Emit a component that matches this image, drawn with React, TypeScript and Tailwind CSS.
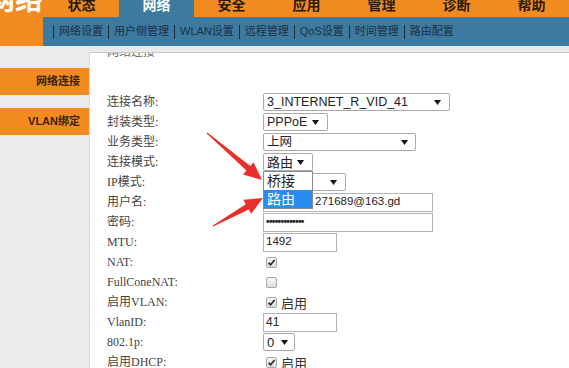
import React from "react";

const SANS = "font-[family-name:'Liberation_Sans','Noto_Sans_CJK_SC',sans-serif]";

function Tri() {
  return (
    <svg width="7" height="5" viewBox="0 0 7 5" className="shrink-0">
      <path d="M0 0 L7 0 L3.5 5 Z" fill="#111" />
    </svg>
  );
}

function Check({ on }: { on: boolean }) {
  return (
    <span className="ml-[3px] w-[11px] h-[11px] rounded-[2px] border border-[#a8a8a8] bg-gradient-to-b from-[#f6f6f6] to-[#dedede] flex items-center justify-center">
      {on && (
        <svg width="9" height="9" viewBox="0 0 9 9">
          <path d="M1.6 4.8 L3.6 6.8 L7.6 2" stroke="#2a2a2a" strokeWidth="1.7" fill="none" />
        </svg>
      )}
    </span>
  );
}

const labels = [
  "连接名称:",
  "封装类型:",
  "业务类型:",
  "连接模式:",
  "IP模式:",
  "用户名:",
  "密码:",
  "MTU:",
  "NAT:",
  "FullConeNAT:",
  "启用VLAN:",
  "VlanID:",
  "802.1p:",
  "启用DHCP:",
];

export default function App() {
  const selBase =
    "h-[18px] border border-[#a9a9a9] rounded-[2px] bg-white flex items-center justify-between pl-[3px] text-[12.5px] text-[#222] leading-none " +
    SANS;
  const inBase =
    "h-[19px] border border-[#b4b4b4] bg-white flex items-center pl-[2px] text-[11.5px] text-[#222] leading-none " +
    SANS;

  const controls: React.ReactNode[] = [
    <div className={selBase + " w-[187px] pr-[8px]"}>
      <span>3_INTERNET_R_VID_41</span>
      <Tri />
    </div>,
    <div className={selBase + " w-[65px] pr-[8px]"}>
      <span>PPPoE</span>
      <Tri />
    </div>,
    <div className={selBase + " w-[153px] pr-[7px]"}>
      <span>上网</span>
      <Tri />
    </div>,
    <div className="relative">
      <div className={selBase + " w-[50px] pr-[8px] border-[#7eaedc]"}>
        <span className="text-[13px]">路由</span>
        <Tri />
      </div>
      <div className={"absolute left-0 top-[18px] z-10 w-[50px] border border-[#8a8a8a] bg-white flex flex-col text-[14px] leading-none " + SANS}>
        <div className="h-[18px] flex items-center pl-[3px] text-[#222]">桥接</div>
        <div className="h-[18px] flex items-center pl-[3px] bg-[#2a8cf0] text-white">路由</div>
      </div>
    </div>,
    <div className={selBase + " w-[83px] pr-[8px] justify-end"}>
      <Tri />
    </div>,
    <div className={inBase + " w-[170px] pl-[51px]"}>271689@163.gd</div>,
    <div className={"h-[19px] w-[170px] border border-[#b4b4b4] bg-white flex items-center pl-[2px] text-[10px] font-bold tracking-[-0.6px] text-[#222] leading-none " + SANS}>
      •••••••••••••
    </div>,
    <div className={inBase + " w-[74px]"}>1492</div>,
    <Check on={true} />,
    <Check on={false} />,
    <div className="flex items-center">
      <Check on={true} />
      <span className={"ml-[4px] mt-[3px] text-[13px] text-[#333] " + SANS}>启用</span>
    </div>,
    <div className={inBase + " w-[74px] text-[12px]"}>41</div>,
    <div className={selBase + " w-[32px] pr-[6px]"}>
      <span className="text-[13px]">0</span>
      <Tri />
    </div>,
    <div className="flex items-center">
      <Check on={true} />
      <span className={"ml-[4px] mt-[3px] text-[13px] text-[#333] " + SANS}>启用</span>
    </div>,
  ];

  const tabs = ["状态", "网络", "安全", "应用", "管理", "诊断", "帮助"];
  const subs = ["网络设置", "用户侧管理", "WLAN设置", "远程管理", "QoS设置", "时间管理", "路由配置"];

  return (
    <div className="relative w-[569px] h-[368px] overflow-hidden bg-white">
      {/* header */}
      <div className="flex h-[46px]">
        <div className="w-[90px] bg-[#f18b1f] overflow-hidden">
          <div className={"-mt-[13px] -ml-[13px] text-[28px] leading-[28px] font-bold text-white whitespace-nowrap " + SANS}>
            网络
          </div>
        </div>
        <div className="flex-1 flex flex-col">
          <div className="h-[17px] bg-[#f18b1f] flex pl-[1px]">
            {tabs.map((t) => (
              <div
                key={t}
                className={
                  "w-[75px] shrink-0 flex justify-center text-[14px] leading-[13px] font-bold " +
                  SANS +
                  (t === "网络" ? " bg-[#3d7aa0] text-white" : " text-[#2a1a08]")
                }
              >
                <span className="-mt-[1px]">{t}</span>
              </div>
            ))}
          </div>
          <div className={"h-[29px] bg-[#3d7aa0] flex items-center pl-[10px] text-[11px] text-[#1b3044] " + SANS}>
            {subs.map((s) => (
              <React.Fragment key={s}>
                <span className="w-px h-[14px] bg-[#1b2d3e]" />
                <span className="px-[5px] leading-none">{s}</span>
              </React.Fragment>
            ))}
          </div>
        </div>
      </div>

      {/* body */}
      <div className="flex h-[322px]">
        <div className={"w-[89px] bg-[#ebebeb] flex flex-col pt-[22px] gap-[13px] text-[11px] font-bold text-[#3a2410] " + SANS}>
          <div className="h-[27px] bg-[#f18b1f] flex items-center justify-end pr-[9px]">网络连接</div>
          <div className="h-[27px] bg-[#f18b1f] flex items-center justify-end pr-[9px]">VLAN绑定</div>
        </div>
        <div className="flex-1 flex flex-col bg-[#ebebeb]">
          <div className="h-[6px] bg-[#e9e9e9]" />
          <div className="h-px bg-[#c9c9c9]" />
          <div className="flex-1 bg-white border-l border-[#dadada] overflow-hidden">
            <div className={"-mt-[7px] pl-[17px] text-[12px] leading-[12px] text-[#666] " + SANS}>网络连接</div>
            <div className="mt-[34px] flex flex-col">
              {labels.map((l, i) => (
                <div key={l} className="h-[20px] flex items-center">
                  <div className="w-[173px] pl-[17px] shrink-0 text-[12px] text-[#444] leading-none font-[family-name:'Liberation_Serif','Noto_Sans_CJK_SC',serif]">
                    {l}
                  </div>
                  {controls[i]}
                </div>
              ))}
            </div>
          </div>
        </div>
      </div>

      {/* annotation arrows */}
      <svg className="absolute left-0 top-0 pointer-events-none z-20" width="569" height="368" viewBox="0 0 569 368">
        <polygon
          points="206.7,133.4 246.4,170.6 243.1,174.4 262,180 253.5,162.2 250.3,166.0 207.3,132.6"
          fill="#e8302a"
        />
        <polygon
          points="213.2,226.4 248.8,209.4 251.2,213.8 263,198 243.4,199.8 245.8,204.2 212.8,225.6"
          fill="#e8302a"
        />
      </svg>
    </div>
  );
}
